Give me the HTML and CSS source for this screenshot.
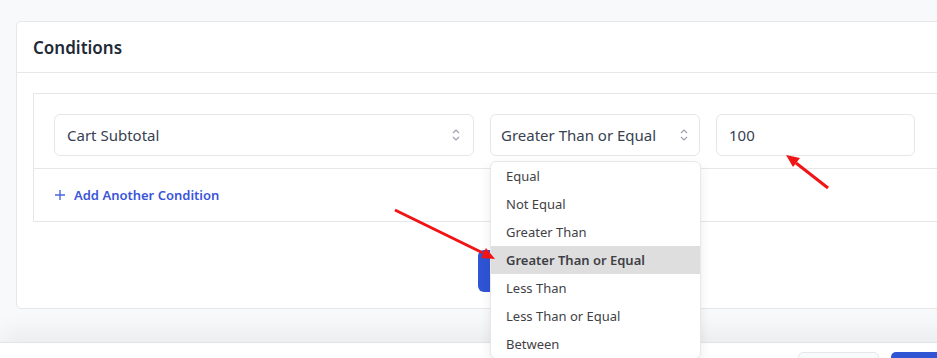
FILE: index.html
```html
<!DOCTYPE html>
<html lang="en">
  <head>
    <meta charset="UTF-8" />
    <meta name="viewport" content="width=device-width, initial-scale=1.0" />
    <title>Conditions</title>
    <link rel="stylesheet" href="styles.css">
  </head>
  <body>
    <div class="page">
      <div class="card">
        <div class="card-header">Conditions</div>
        <div class="card-body">
          <div class="rules">
            <div class="rule-row">
              <div class="select select-field">
                <span>Cart Subtotal</span>
                <svg class="chevrons" viewBox="0 0 10 16">
                  <path d="M2 6l3-3 3 3M2 10l3 3 3-3" />
                </svg>
              </div>
              <div class="select-wrap">
                <div class="select select-op">
                  <span>Greater Than or Equal</span>
                  <svg class="chevrons" viewBox="0 0 10 16">
                    <path d="M2 6l3-3 3 3M2 10l3 3 3-3" />
                  </svg>
                </div>
                <ul class="menu">
                  <li>Equal</li>
                  <li>Not Equal</li>
                  <li>Greater Than</li>
                  <li class="active">Greater Than or Equal</li>
                  <li>Less Than</li>
                  <li>Less Than or Equal</li>
                  <li>Between</li>
                </ul>
              </div>
              <div class="select select-value"><span>100</span></div>
            </div>
            <div class="rules-footer">
              <a class="add-link" href="#">
                <svg class="plus" viewBox="0 0 12 12">
                  <path d="M6 1v10M1 6h10" />
                </svg>
                Add Another Condition
              </a>
            </div>
          </div>
          <div class="actions">
            <button class="btn-primary">Save</button>
          </div>
        </div>
      </div>
    </div>

    <div class="footer">
      <button class="btn-light">Cancel</button>
      <button class="btn-blue">Save</button>
    </div>

    <!-- annotation arrows -->
    <svg class="annotations" viewBox="0 0 937 358">
      <line x1="828" y1="188" x2="796" y2="163" />
      <polygon points="786,155 800,158 793,167" />
      <line x1="395" y1="210" x2="483" y2="253" />
      <polygon points="495,259 481,258 486,248" />
    </svg>
  </body>
</html>
```

FILE: styles.css
```css
* {
  margin: 0;
  padding: 0;
  box-sizing: border-box;
}

body {
  font-family: "Noto Sans", "Open Sans", sans-serif;
  background-color: #f8f9fb;
  color: #374151;
  overflow: hidden;
  height: 358px;
  position: relative;
}

.page {
  padding: 21px 0 0 16px;
}

.card {
  width: 1000px;
  background-color: #fff;
  border: 1px solid #e5e7eb;
  border-radius: 5px;
}

.card-header {
  height: 51px;
  padding: 0 16px;
  display: flex;
  align-items: center;
  border-bottom: 1px solid #e5e7eb;
  font-size: 17px;
  font-weight: 600;
  color: #1f2937;
}

.card-body {
  padding: 20px 16px 16px;
}

.rules {
  border: 1px solid #e5e7eb;
}

.rule-row {
  display: flex;
  gap: 16px;
  padding: 20px 20px 12px;
  border-bottom: 1px solid #e5e7eb;
}

.select {
  height: 42px;
  border: 1px solid #e5e7eb;
  border-radius: 6px;
  display: flex;
  align-items: center;
  justify-content: space-between;
  padding: 0 12px;
  font-size: 15px;
  color: #374151;
  background-color: #fff;
}

.select-field {
  width: 420px;
}

.select-wrap {
  position: relative;
}

.select-op {
  width: 210px;
  padding-left: 10px;
  padding-right: 10px;
}

.select-value {
  width: 199px;
}

.chevrons {
  width: 10px;
  height: 16px;
  fill: none;
  stroke: #9ca3af;
  stroke-width: 1.2;
}

.menu {
  position: absolute;
  top: 47px;
  left: 0;
  width: 211px;
  list-style: none;
  background-color: #fff;
  border: 1px solid #e5e7eb;
  border-radius: 6px;
  box-shadow: 0 4px 12px rgba(0, 0, 0, 0.08);
  z-index: 5;
  overflow: hidden;
}

.menu li {
  height: 28px;
  display: flex;
  align-items: center;
  padding-left: 15px;
  font-size: 13px;
  color: #3f3f46;
}

.menu li.active {
  background-color: #dedede;
  font-weight: 600;
  color: #3f3f46;
}

.rules-footer {
  height: 52px;
  display: flex;
  align-items: center;
  padding: 0 20px;
}

.add-link {
  display: flex;
  align-items: center;
  gap: 8px;
  font-size: 13px;
  font-weight: 600;
  color: #3b55d9;
  text-decoration: none;
}

.plus {
  width: 12px;
  height: 12px;
  stroke: #4c66dd;
  stroke-width: 1.4;
}

.actions {
  display: flex;
  padding: 28px 0 0 445px;
}

.btn-primary {
  width: 90px;
  height: 42px;
  border: none;
  border-radius: 6px;
  background-color: #2f54d4;
  color: #fff;
  font-family: inherit;
  font-size: 14px;
}

.footer {
  position: absolute;
  left: 0;
  top: 342px;
  width: 1000px;
  height: 60px;
  background-color: #fff;
  border-top: 1px solid #e2e4e8;
  box-shadow: 0 -12px 22px rgba(0, 0, 0, 0.05);
  display: flex;
  justify-content: flex-end;
  gap: 12px;
  padding: 9px 16px 0 0;
}

.btn-light {
  width: 81px;
  height: 36px;
  border: 1px solid #e5e7eb;
  border-radius: 5px;
  background-color: #f9fafb;
  font-family: inherit;
  font-size: 14px;
}

.btn-blue {
  width: 93px;
  height: 36px;
  border: none;
  border-radius: 5px;
  background-color: #2f54d4;
  color: #fff;
  font-family: inherit;
  font-size: 14px;
}

.annotations {
  position: absolute;
  left: 0;
  top: 0;
  width: 937px;
  height: 358px;
  z-index: 10;
  pointer-events: none;
}

.annotations line {
  stroke: #f01414;
  stroke-width: 3;
}

.annotations polygon {
  fill: #f01414;
}
```
